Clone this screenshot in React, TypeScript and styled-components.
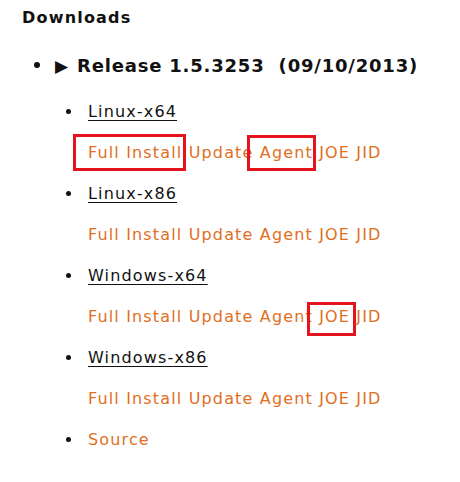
import React from "react";
import styled, { createGlobalStyle } from "styled-components";

const GlobalStyle = createGlobalStyle`
  html, body { margin: 0; padding: 0; background: #ffffff; }
  body { font-family: "DejaVu Sans", Verdana, sans-serif; color: #111; }
`;

const Page = styled.div`
  padding-left: 22px;
  width: 438px;
`;

const Heading = styled.h3`
  margin: 0;
  font-size: 16px;
  font-weight: bold;
  letter-spacing: 1.2px;
  line-height: 36px;
`;

const List = styled.ul<{ $top?: number }>`
  list-style: none;
  margin: ${(p) => p.$top ?? 0}px 0 0 0;
  padding: 0;
`;

const Row = styled.div<{ $height: number }>`
  display: flex;
  align-items: center;
  height: ${(p) => p.$height}px;
`;

const BulletCell = styled.span<{ $width: number; $offset: number; $size: number }>`
  flex: 0 0 ${(p) => p.$width}px;
  display: flex;
  align-items: center;
  &::before {
    content: "";
    display: block;
    margin-left: ${(p) => p.$offset}px;
    width: ${(p) => p.$size}px;
    height: ${(p) => p.$size}px;
    border-radius: 50%;
    background: #111;
  }
`;

const ReleaseTitle = styled.span`
  font-size: 18px;
  font-weight: bold;
  letter-spacing: 0.8px;
  white-space: pre;
`;

const Triangle = styled.span`
  display: inline-block;
  margin-right: 9px;
  font-size: 17px;
  letter-spacing: 0;
`;

const Nested = styled.div`
  padding-left: 33px;
`;

const PlatformLink = styled.a`
  font-size: 16px;
  letter-spacing: 1.15px;
  color: #111;
  text-decoration: underline;
  text-underline-offset: 3px;
`;

const LinkRow = styled.div`
  line-height: 41px;
  padding-left: 33px;
  font-size: 16px;
  letter-spacing: 1.15px;
  white-space: pre;
`;

const OrangeLink = styled.a`
  color: #e06f1f;
  text-decoration: none;
  font-size: 16px;
  letter-spacing: 1.15px;
  position: relative;
`;

const Mark = styled.span<{ $l: number; $r: number; $t: number; $b: number }>`
  position: absolute;
  left: ${(p) => -p.$l}px;
  right: ${(p) => -p.$r}px;
  top: ${(p) => -p.$t}px;
  bottom: ${(p) => -p.$b}px;
  border: 3px solid #e3141e;
  pointer-events: none;
`;

type Box = { l: number; r: number; t: number; b: number };
type Platform = { name: string; marks?: Record<string, Box> };

const platforms: Platform[] = [
  {
    name: "Linux-x64",
    marks: {
      "Full Install": { l: 15, r: 4, t: 9, b: 9 },
      Agent: { l: 13, r: 3, t: 8, b: 9 },
    },
  },
  { name: "Linux-x86" },
  { name: "Windows-x64", marks: { JOE: { l: 12, r: 6, t: 5, b: 10 } } },
  { name: "Windows-x86" },
];

const items = ["Full Install", "Update", "Agent", "JOE", "JID"];

export default function App() {
  return (
    <>
      <GlobalStyle />
      <Page>
        <Heading>Downloads</Heading>
        <List $top={6}>
          <li>
            <Row $height={46}>
              <BulletCell $width={33} $offset={12} $size={6} />
              <ReleaseTitle>
                <Triangle>▶</Triangle>
                {"Release 1.5.3253  (09/10/2013)"}
              </ReleaseTitle>
            </Row>
            <Nested>
              <List $top={3}>
                {platforms.map((p) => (
                  <li key={p.name}>
                    <Row $height={41}>
                      <BulletCell $width={33} $offset={11} $size={5} />
                      <PlatformLink href="#">{p.name}</PlatformLink>
                    </Row>
                    <LinkRow>
                      {items.map((it, i) => (
                        <React.Fragment key={it}>
                          {i > 0 ? " " : ""}
                          <OrangeLink href="#">
                            {it}
                            {p.marks && p.marks[it] ? (
                              <Mark
                                $l={p.marks[it].l}
                                $r={p.marks[it].r}
                                $t={p.marks[it].t}
                                $b={p.marks[it].b}
                              />
                            ) : null}
                          </OrangeLink>
                        </React.Fragment>
                      ))}
                    </LinkRow>
                  </li>
                ))}
                <li>
                  <Row $height={41}>
                    <BulletCell $width={33} $offset={11} $size={5} />
                    <OrangeLink href="#">Source</OrangeLink>
                  </Row>
                </li>
              </List>
            </Nested>
          </li>
        </List>
      </Page>
    </>
  );
}
